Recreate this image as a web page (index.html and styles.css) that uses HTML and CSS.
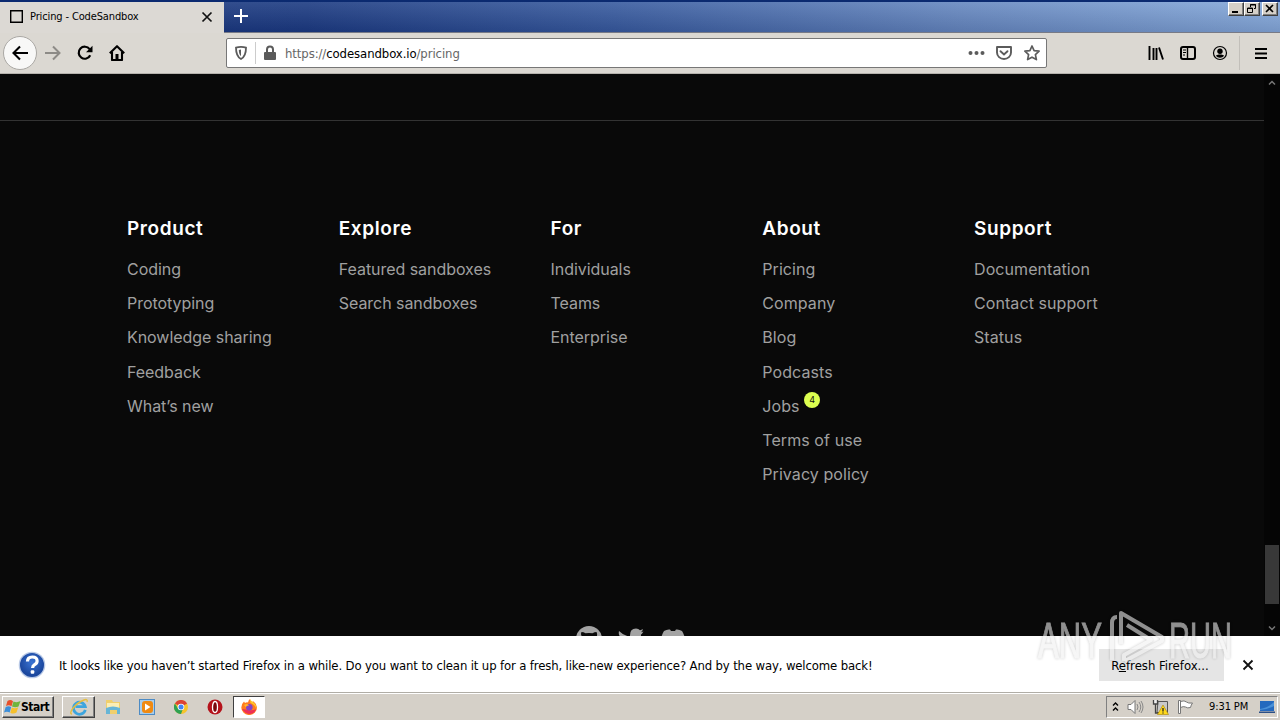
FILE: index.html
```html
<!DOCTYPE html>
<html lang="en">
<head>
<meta charset="utf-8">
<title>Pricing - CodeSandbox</title>
<link rel="stylesheet" href="styles.css">
</head>
<body>
<div class="screen">
  <header class="titlebar">
    <div class="tab">
      <span class="favicon"></span>
      <span class="tab-title">Pricing - CodeSandbox</span>
      <svg class="tab-close" width="12" height="12" viewBox="0 0 12 12"><path d="M1.500 1.500l9 9M10.500 1.500l-9 9" stroke="#111" stroke-width="1.700"/></svg>
    </div>
    <svg class="new-tab" width="14" height="14" viewBox="0 0 14 14"><path d="M7 0v14M0 7h14" stroke="#fff" stroke-width="2"/></svg>
    <div class="window-buttons">
      <span class="wb"><svg width="14" height="12"><path d="M3 9h6" stroke="#000" stroke-width="2"/></svg></span>
      <span class="wb"><svg width="14" height="12"><path d="M5.500 4V1.500h5v4H9M5 2h6M2.500 5h5v4.500h-5zM2 5.500h6" fill="none" stroke="#000"/></svg></span>
      <span class="wb wb-close"><svg width="13" height="12"><path d="M3 2l7 7M10 2L3 9" stroke="#000" stroke-width="1.600"/></svg></span>
    </div>
  </header>

  <nav class="toolbar">
    <div class="nav-buttons">
      <span class="back"><svg width="16" height="16" viewBox="0 0 16 16"><path d="M16 8H1.500M8 1.500L1.500 8 8 14.500" fill="none" stroke="#000" stroke-width="2.100"/></svg></span>
      <svg width="16" height="16" viewBox="0 0 16 16"><path d="M0 8h14.500M8 1.500L14.500 8 8 14.500" fill="none" stroke="#8d8b87" stroke-width="2"/></svg>
      <svg width="16" height="16" viewBox="0 0 16 16"><path d="M13.200 10.200A6 6 0 1 1 12.600 4.200" fill="none" stroke="#000" stroke-width="2.200"/><path d="M15.500 .8v6.500H9z"/></svg>
      <svg width="16" height="16" viewBox="0 0 16 16"><path d="M.8 8.300L8 1.200l7.200 7.100M3 7v8h10V7" fill="none" stroke="#000" stroke-width="2.100" stroke-linejoin="round"/><path d="M6.500 9h3v6h-3z"/></svg>
    </div>
    <div class="urlbar">
      <svg class="shield" width="14" height="16" viewBox="0 0 14 16"><path d="M7 1.800c2 0 3.500.3 5 .9 0 5-.7 9-5 11.300C2.700 11.700 2 7.700 2 2.700c1.500-.6 3-.9 5-.9z" fill="none" stroke="#5b5b5b" stroke-width="1.800"/><path d="M7 4.500v6.800C5.300 9.700 4.900 7.500 4.800 5z" fill="#5b5b5b"/></svg>
      <span class="url-divider"></span>
      <svg class="lock" width="12" height="16" viewBox="0 0 12 16"><rect x="0" y="7" width="12" height="8" rx="1" fill="#5b5b5b"/><path d="M3 8V4.500a3 3 0 0 1 6 0V8" fill="none" stroke="#5b5b5b" stroke-width="2"/></svg>
      <span class="url">https://<b>codesandbox.io</b>/pricing</span>
      <span class="url-actions">
        <svg width="17" height="16"><g fill="#5b5b5b"><circle cx="2.500" cy="8" r="2"/><circle cx="8.500" cy="8" r="2"/><circle cx="14.500" cy="8" r="2"/></g></svg>
        <svg width="16" height="16"><path d="M1 2h14v5.500a7 6.500 0 0 1-14 0z" fill="none" stroke="#5b5b5b" stroke-width="1.900" stroke-linejoin="round"/><path d="M4.500 6.200L8 9.400l3.500-3.200" fill="none" stroke="#5b5b5b" stroke-width="1.900" stroke-linecap="round"/></svg>
        <svg width="16" height="16"><path d="M8 1l2.100 4.600 5 .6-3.700 3.400 1 5L8 12.200l-4.400 2.400 1-5L.9 6.200l5-.6z" fill="none" stroke="#5b5b5b" stroke-width="1.700" stroke-linejoin="round"/></svg>
      </span>
    </div>
    <div class="tools">
      <svg width="16" height="16"><path d="M1.500 1v14M5.500 3v12M8.500 3v12M11 2.500l4 12" stroke="#000" stroke-width="1.900"/></svg>
      <svg width="16" height="16"><rect x="1" y="2" width="14" height="12" rx="2" fill="none" stroke="#000" stroke-width="2"/><path d="M7.500 2v12" stroke="#000" stroke-width="1.400"/><path d="M3 5h3M3 7.500h3M3 10h2" stroke="#000"/></svg>
      <svg width="16" height="16"><circle cx="8" cy="8" r="6.500" fill="none" stroke="#000" stroke-width="1.200"/><circle cx="8" cy="6.300" r="2.700"/><path d="M3.800 10.500c2-1.500 6.400-1.500 8.400 0-2 3-6.400 3-8.400 0z"/></svg>
      <span class="tool-divider"></span>
      <svg width="12" height="14"><path d="M0 3h12M0 7.500h12M0 12h12" stroke="#000" stroke-width="1.900"/></svg>
    </div>
  </nav>

  <main class="viewport">
    <div class="page">
      <div class="rule"></div>
      <footer class="footer">
        <section><h2>Product</h2><a>Coding</a><a>Prototyping</a><a>Knowledge sharing</a><a>Feedback</a><a>What’s new</a></section>
        <section><h2>Explore</h2><a>Featured sandboxes</a><a>Search sandboxes</a></section>
        <section><h2>For</h2><a>Individuals</a><a>Teams</a><a>Enterprise</a></section>
        <section class="loose"><h2>About</h2><a>Pricing</a><a>Company</a><a>Blog</a><a>Podcasts</a><a class="jobs">Jobs<i class="badge">4</i></a><a>Terms of use</a><a>Privacy policy</a></section>
        <section class="loose"><h2>Support</h2><a>Documentation</a><a>Contact support</a><a>Status</a></section>
      </footer>
      <div class="social">
        <svg width="26" height="26" viewBox="0 0 26 26"><circle cx="13" cy="13" r="13" fill="#a3a3a3"/><path d="M5.500 6q2 0 4 1.200 3.500-.6 7 0Q18.500 6 20.500 6q1 2 .4 4 1 5-3 7v7H9v-7q-5-2-3.400-7Q4.500 8 5.500 6z" fill="#090909"/></svg>
        <svg width="26" height="26" viewBox="0 0 26 26"><path d="M1 5q5 5 11 5.500-.5-8 6-8 2.500 0 4 1.700 1.500-.3 3-1.200-.4 2-2 3.200l2.500-.7Q24 8 23 8.500 23 23 9 24q-5 0-8-2 4 0 7-2-4-1-5-4h2q-4-1-4-5l2 .5Q0 9 1 5z" fill="#a3a3a3"/></svg>
        <svg width="26" height="26" viewBox="0 0 26 26"><path d="M4 5q3-2 6-1.500l1 1.500h4l1-1.500q3-.5 6 1.500 4 6 3 15-3 2-6 2l-2-3H9l-2 3q-3 0-6-2Q0 11 4 5z" fill="#a3a3a3"/></svg>
      </div>
    </div>
    <div class="scrollbar">
      <svg width="8" height="6"><path d="M1 4.500l3-3 3 3" fill="none" stroke="#777" stroke-width="1.500"/></svg>
      <div class="thumb"></div>
      <svg width="8" height="6"><path d="M1 1.500l3 3 3-3" fill="none" stroke="#777" stroke-width="1.500"/></svg>
    </div>
  </main>

  <aside class="notice">
    <svg class="help" width="28" height="28" viewBox="0 0 28 28"><defs><radialGradient id="hg" cx=".5" cy=".4"><stop offset="0" stop-color="#3a74d4"/><stop offset="1" stop-color="#1c489f"/></radialGradient></defs><circle cx="14" cy="14" r="13.300" fill="#b9c9e6"/><circle cx="14" cy="14" r="12" fill="url(#hg)"/><path d="M9.500 10.500q0-4.500 4.800-4.500t4.800 4q0 2.300-2.500 3.700-2 1.100-2 3.300" fill="none" stroke="#fff" stroke-width="3.200"/><rect x="12.700" y="19.300" width="3.600" height="3.500" rx="1" fill="#fff"/></svg>
    <span class="notice-text">It looks like you haven’t started Firefox in a while. Do you want to clean it up for a fresh, like-new experience? And by the way, welcome back!</span>
    <button class="refresh"><span>R<u>e</u>fresh Firefox...</span></button>
    <svg class="notice-close" width="12" height="12"><path d="M1.500 1.500l9 9M10.500 1.500l-9 9" stroke="#111" stroke-width="1.800"/></svg>
  </aside>

  <div class="taskbar">
    <div class="start">
      <svg width="17" height="16"><path d="M3.500 2q3-2 5.500.2L7.500 7.300Q5 5.500 2 7z" fill="#e8502a"/><path d="M9.500 2.500q3.500 1.500 7-.5L14.500 7.500Q11.500 9 8 7.500z" fill="#6fb53c"/><path d="M1.700 8q2.800-1.600 5.500 0l-1.500 5.500Q3 12 0 13.500z" fill="#3d8fda"/><path d="M7.800 8.500q3.200 1.500 6.400-.2L12.500 13.500q-3 2-6.200.2z" fill="#f6c02c"/></svg>
      <span>Start</span>
    </div>
    <div class="task raised"><svg width="20" height="18" viewBox="0 0 20 18"><path d="M16.300 11.800A6 6 0 1 1 16.300 8.700H6.500" fill="none" stroke="#3da5de" stroke-width="2.700"/><path d="M3 16C-1 16 5 6 15 2q4-1.500 3 2" fill="none" stroke="#e5bd3e" stroke-width="1.400"/></svg></div>
    <div class="task"><svg width="18" height="18"><path d="M2 2h6l1 2h7v12H2z" fill="#f0cf6c"/><path d="M3 5h12v6H3z" fill="#fbeeb5"/><path d="M2 10q7-3 14 0v6h-3v-4H6v4H2z" fill="#67b5d6"/></svg></div>
    <div class="task"><svg width="16" height="18"><rect x=".5" y="1.500" width="15" height="15" fill="#a8cdec" stroke="#4d8bc4"/><rect x="3" y="3" width="11" height="12" rx="3" fill="#f08a12"/><path d="M6 5.500l5.500 3.500L6 12.500z" fill="#fff"/></svg></div>
    <div class="task"><svg width="14" height="14" viewBox="-7 -7 14 14"><circle r="7" fill="#f6c42c"/><path d="M0 0L-6.100-3.500A7 7 0 0 1 6.100-3.500z" fill="#dc4335"/><path d="M-6.100-3.500A7 7 0 0 0 0 7L2 1.500-3 1.500z" fill="#2fa152"/><circle r="3.300" fill="#fff"/><circle r="2.500" fill="#4285f4"/></svg></div>
    <div class="task"><svg width="16" height="16"><circle cx="8" cy="8" r="7.500" fill="#b5121b"/><ellipse cx="8" cy="8" rx="2.500" ry="5.500" fill="#7a080d" stroke="#fff" stroke-width="1.300"/></svg></div>
    <div class="task active"><svg width="16" height="16"><path d="M3 2.500l1 1.500q1-.8 3-.6Q7.500 1 9 0q0 2 2.200 3l1-.8Q16 5 16 8.500A7.800 7.500 0 0 1 .3 8.500Q.3 5 3 2.500z" fill="#ff7b1f"/><path d="M9 0q1 2 3 3 4 3 3.500 7-2-5-6-6z" fill="#ffca28"/><path d="M1 10q3 5 8 5 5-.5 6-5-3 2-7 1z" fill="#ee2f55"/><circle cx="8.300" cy="8.300" r="3.300" fill="#8245c8"/><path d="M3 6q3-2 5 .5-3 0-3 2z" fill="#ffb42a"/></svg></div>
    <div class="tray">
      <svg width="7" height="11"><path d="M1 4.500l2.500-2.500L6 4.500M1 9.500L3.500 7 6 9.500" fill="none" stroke="#000" stroke-width="1.400"/></svg>
      <svg width="17" height="16"><path d="M1 5.500h3l4-4v13l-4-4H1z" fill="#fff" stroke="#777"/><path d="M10 5q2 3 0 6M12 3q3.500 5 0 10M14 2q4 6 0 12" fill="none" stroke="#888"/></svg>
      <svg width="17" height="16"><path d="M6 2.500h9.500v11H5z" fill="#c9c9c9" stroke="#555"/><path d="M1 1h5v4H1z" fill="#eee"/><path d="M1.500 1v4h4V1M3.500 5v9h3" fill="none" stroke="#444" stroke-width="1.300"/><path d="M11 6l5.500 9.500h-11z" fill="#ffd91a" stroke="#aa8500" stroke-width=".6"/><path d="M11 9v3.500M11 13.500v1" stroke="#222" stroke-width="1.300"/></svg>
      <svg width="17" height="16"><path d="M3.500 2.500q4-1.500 6 .5 1.500 1.500 6 1-1.500 2-2 4.500-3 1-5-.5-2-1-5 .5z" fill="#fff" stroke="#777"/><path d="M1.500 1.500h2v13h-2z" fill="#fff" stroke="#777"/></svg>
      <span class="clock">9:31 PM</span>
      <svg class="desktop" width="16" height="14"><path d="M1 1h14v10H1z" fill="#2469be"/><path d="M1 9Q9 8 15 2v4Q9 9 1 10z" fill="#4a91d8"/><path d="M0 11.500h16v1.500H0z" fill="#2b4f86"/></svg>
    </div>
  </div>

  <svg class="watermark" width="204" height="64" viewBox="1034 604 204 64">
    <g class="wm-letters">
      <text x="1038" y="658" textLength="64" lengthAdjust="spacingAndGlyphs">ANY</text>
      <text x="1169" y="658" textLength="63" lengthAdjust="spacingAndGlyphs">RUN</text>
    </g>
    <path class="wm-mark" d="M1112 660v-37q0-6 5-6M1121 644v-31l41 24v4l-37 20M1127 625l24 15-27 15v6"/>
  </svg>
</div>
</body>
</html>
```

FILE: styles.css
```css
* { box-sizing: border-box; }
body { margin: 0; font-family: "DejaVu Sans Condensed", "DejaVu Sans", sans-serif; font-stretch: condensed; font-size: 11px; color: #000; }
svg { display: block; flex: none; }
.screen { position: relative; width: 1280px; height: 720px; overflow: hidden; display: flex; flex-direction: column; white-space: nowrap; }

.titlebar { height: 33px; display: flex; align-items: flex-start; border-top: 2px solid #0b2a70; border-bottom: 1px solid #777a86; background: linear-gradient(180deg, rgba(255,255,255,.1), rgba(0,0,30,.12)), linear-gradient(90deg, #17357d 0, #1c3b82 24%, #385b9f 48%, #6688c0 75%, #86aadb 100%); }
.tab { width: 224px; height: 32px; margin-bottom: -1px; padding: 0 11px 3px 10px; display: flex; align-items: center; background: #dcd9d4; flex: none; }
.favicon { width: 13px; height: 13px; border: 1px solid #000; box-shadow: inset 0 0 0 .4px #000; }
.tab-title { margin-left: 7px; letter-spacing: -.13px; flex: 1; }
.new-tab { margin: 7px 0 0 10px; }
.window-buttons { margin-left: auto; padding-right: 2px; display: flex; }
.wb { width: 16px; height: 14px; background: #d5d0c8; border: 1px solid; border-color: #fff #404040 #404040 #fff; box-shadow: inset -1px -1px #808080; }
.wb-close { margin-left: 2px; }

.toolbar { height: 41px; display: flex; align-items: center; background: #dbd8d2; border-bottom: 1px solid #b5b2ad; }
.nav-buttons { width: 226px; padding-left: 3px; display: flex; align-items: center; gap: 16px; }
.back { width: 34px; height: 34px; border-radius: 50%; border: 1px solid #aaa8a4; background: #f8f8f7; display: grid; place-items: center; margin-right: -8px; }
.urlbar { width: 821px; height: 30px; padding: 0 6px 0 7px; display: flex; align-items: center; background: #fff; border: 1px solid #777; border-radius: 2px; }
.url-divider { width: 1px; height: 22px; margin: 0 8px 0 7px; background: #ccc; }
.url { margin-left: 9px; font-size: 13px; color: #666; letter-spacing: -.09px; }
.url b { font-weight: normal; color: #000; }
.url-actions { margin-left: auto; display: flex; gap: 12px; }
.url-actions svg:first-child { margin-right: -1px; }
.tools { margin-left: auto; padding-right: 13px; display: flex; align-items: center; gap: 16px; }
.tool-divider { width: 1px; height: 34px; background: #c2bfba; margin: 0 -1px 0 -5px; }

.viewport { height: 562px; background: #090909; display: flex; }
.page { width: 1264px; overflow: hidden; }
.rule { margin-top: 46px; height: 1px; background: #333; }
.footer { height: 505px; padding: 95px 0 0 127px; display: grid; grid-template-columns: repeat(5, 211.75px); align-content: start; font-family: Inter, sans-serif; }
.footer h2 { margin: 0 0 12px; font-size: 19px; line-height: 26px; font-weight: 600; letter-spacing: .6px; color: #fff; }
.footer a { display: block; height: 34.200px; line-height: 30px; font-size: 16px; letter-spacing: -.05px; color: #a0a0a0; }
.footer .loose a { letter-spacing: .08px; }
.footer .jobs { position: relative; letter-spacing: .3px; }
.badge { position: absolute; left: 42px; top: 1px; width: 16px; height: 16px; border-radius: 50%; background: #dcff50; color: #111; font-size: 9px; line-height: 16px; font-style: normal; text-align: center; letter-spacing: 0; }
.social { height: 26px; padding-left: 576px; display: flex; gap: 16px; }
.scrollbar { width: 16px; padding: 6px 0 5px; display: flex; flex-direction: column; align-items: center; background: #050505; }
.thumb { width: 14px; height: 59px; margin: auto 0 21px 0; background: #383838; }

.notice { height: 56px; padding: 2px 26px 0 18px; display: flex; align-items: center; background: #fff; font-size: 12px; }
.notice-text { margin-left: 13px; font-size: 13px; letter-spacing: -.14px; }
.refresh { margin-left: auto; width: 125px; height: 32px; padding: 0 3px 0 0; border: 0; background: #e5e5e5; font: inherit; font-size: 13px; color: #000; }
.notice-close { margin-left: 18px; }

.taskbar { height: 28px; display: flex; align-items: center; padding: 2px 2px 2px; background: #d5d0c8; border-top: 1px solid #b0ada6; box-shadow: inset 0 1px #fff; }
.start { width: 52px; height: 22px; padding-left: 1px; display: flex; align-items: center; font-weight: bold; font-size: 12px; letter-spacing: -.5px; border: 1px solid; border-color: #fff #404040 #404040 #fff; box-shadow: inset -1px -1px #808080; margin-right: 8px; }
.task { width: 34px; height: 22px; display: grid; place-items: center; }
.raised { width: 33px; margin: 0 1px 0 0; border: 1px solid; border-color: #fff #404040 #404040 #fff; box-shadow: inset -1px -1px #808080; }
.active { width: 32px; margin-left: 1px; background: #fff; border: 1px solid; border-color: #404040 #fff #fff #404040; }
.tray { margin-left: auto; width: 172px; height: 22px; padding-left: 5px; display: flex; align-items: center; gap: 8px; border: 1px solid; border-color: #808080 #fff #fff #808080; }
.clock { margin-left: 7px; letter-spacing: -.1px; }
.desktop { margin-left: auto; margin-right: 2px; }

.watermark { position: absolute; left: 1034px; top: 604px; opacity: .58; filter: drop-shadow(0 0 1.500px rgba(0,0,0,.35)); pointer-events: none; }
.wm-letters text { font-family: "Liberation Sans Narrow", "Liberation Sans", sans-serif; font-size: 50px; fill: #f0f0f0; stroke: #f0f0f0; stroke-width: 1; }
.wm-mark { fill: none; stroke: #f0f0f0; stroke-width: 4; stroke-linejoin: round; }
```
